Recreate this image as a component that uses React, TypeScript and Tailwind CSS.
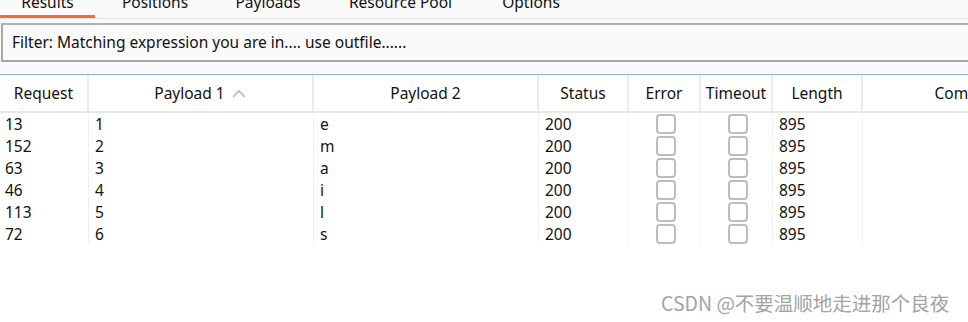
const tabs = [
  { label: "Results", w: "w-[95px]", active: true },
  { label: "Positions", w: "w-[120px]", active: false },
  { label: "Payloads", w: "w-[106px]", active: false },
  { label: "Resource Pool", w: "w-[159px]", active: false },
  { label: "Options", w: "w-[102px]", active: false },
];

const rows = [
  { req: "13", p1: "1", p2: "e" },
  { req: "152", p1: "2", p2: "m" },
  { req: "63", p1: "3", p2: "a" },
  { req: "46", p1: "4", p2: "i" },
  { req: "113", p1: "5", p2: "l" },
  { req: "72", p1: "6", p2: "s" },
];

const cols = "grid grid-cols-[89px_225px_225px_90px_72px_72px_90px_217px]";

const Box = () => (
  <div className="w-[20px] h-[20px] rounded-[4px] border-2 border-[#bdbdbd] bg-white" />
);

const HeadCell = ({ children }: { children: React.ReactNode }) => (
  <div className="flex items-center justify-center pt-[2px] border-r-2 border-[#ebebeb] whitespace-nowrap overflow-hidden">
    {children}
  </div>
);

const App = () => {
  return (
    <div
      className="w-[968px] h-[322px] bg-white overflow-hidden relative text-[15.5px] text-[#111]"
      style={{ fontFamily: '"Noto Sans", "Noto Sans CJK SC", sans-serif' }}
    >
      {/* tab strip, scrolled so only the lower half shows */}
      <div className="h-[19px] overflow-hidden flex border-b border-[#e4e4e4] bg-[#fafafa]">
        {tabs.map((t) => (
          <div key={t.label} className={`${t.w} h-[18px] flex flex-col items-center relative`}>
            <span className="leading-[20px] -mt-[8px] whitespace-nowrap">{t.label}</span>
            {t.active && <div className="absolute bottom-0 left-0 right-0 h-[3px] bg-[#f46a3c]" />}
          </div>
        ))}
      </div>

      <div className="bg-[#fafafa] pt-[4px] pb-[12px]">
        <div className="ml-px h-[39px] border-2 border-r-0 border-[#a8a8a8] border-t-[#b0b0b0] flex items-center pl-[9px]">
          Filter: Matching expression you are in.... use outfile......
        </div>
      </div>

      <div className="h-px bg-[#8fb4df]" />

      <div className={`${cols} h-[38px] border-b-2 border-[#e8e8e8] bg-white`}>
        <HeadCell>Request</HeadCell>
        <HeadCell>
          <span>Payload 1</span>
          <svg width="16" height="10" viewBox="0 0 16 10" className="ml-[6px]">
            <path d="M2 8 L8 2 L14 8" fill="none" stroke="#b9b9b9" strokeWidth="1.6" />
          </svg>
        </HeadCell>
        <HeadCell>Payload 2</HeadCell>
        <HeadCell>Status</HeadCell>
        <HeadCell>Error</HeadCell>
        <HeadCell>Timeout</HeadCell>
        <HeadCell>Length</HeadCell>
        <HeadCell>Comment</HeadCell>
      </div>

      <div>
        {rows.map((r) => (
          <div key={r.req} className={`${cols} h-[22px] leading-[22px]`}>
            <div className="pl-[5px] border-r border-[#f1f1f1]">{r.req}</div>
            <div className="pl-[6px] border-r border-[#f1f1f1]">{r.p1}</div>
            <div className="pl-[6px] border-r border-[#f1f1f1]">{r.p2}</div>
            <div className="pl-[6px] border-r border-[#f1f1f1]">200</div>
            <div className="flex items-center justify-center pl-[3px] border-r border-[#f1f1f1]">
              <Box />
            </div>
            <div className="flex items-center justify-center pl-[3px] border-r border-[#f1f1f1]">
              <Box />
            </div>
            <div className="pl-[6px] border-r border-[#f1f1f1]">895</div>
            <div />
          </div>
        ))}
      </div>

      <div
        className="absolute left-[661px] top-[292px] text-[19.5px] leading-[22px] text-[#a3a3a3] whitespace-nowrap"
        style={{ fontFamily: '"Noto Sans CJK SC", sans-serif' }}
      >
        CSDN @不要温顺地走进那个良夜
      </div>
    </div>
  );
};

export default App;
